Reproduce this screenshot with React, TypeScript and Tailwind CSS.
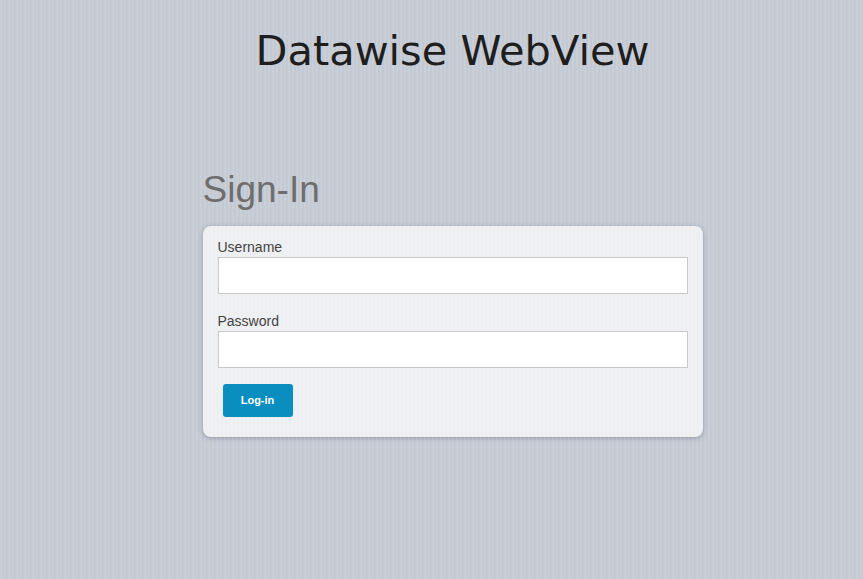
import React from 'react';

const Field = ({label, type}: {label: string; type: string}) => (
    <div className="flex flex-col">
        <label className="text-[14px] leading-[14px] text-[#444]">{label}</label>
        <input type={type} className="mt-[3px] h-[37px] w-[470px] border border-[#c9c9c9] bg-white px-2 text-[14px] outline-none" />
    </div>
);

const App = () => {
    return (
        <div className="min-h-[579px] w-full bg-[#c8ced6] bg-[repeating-linear-gradient(90deg,#cacfd7_0px,#cacfd7_2px,#c4cad3_2px,#c4cad3_4px)] pl-[42px] font-['Liberation_Sans',Arial,sans-serif]">
            <div className="flex flex-col items-center">
                <h1 className="mt-[31px] font-['DejaVu_Sans',Verdana,sans-serif] text-[41.5px] leading-[40px] text-[#1e1e1e]">
                    Datawise WebView
                </h1>
                <div className="mt-[101px] w-[500px]">
                    <h2 className="text-[37px] leading-[36px] text-[#6e6e6e]">Sign-In</h2>
                    <div className="mt-[18px] flex flex-col rounded-[8px] bg-[#eef0f2] bg-[repeating-linear-gradient(90deg,#eff1f3_0px,#eff1f3_2px,#eceef1_2px,#eceef1_4px)] px-[15px] pt-[14px] pb-[20px] shadow-[0_1px_5px_rgba(80,90,110,0.45)]">
                        <Field label="Username" type="text" />
                        <div className="mt-[20px]">
                            <Field label="Password" type="password" />
                        </div>
                        <div className="mt-[16px] pl-[5px]">
                            <button type="submit" className="h-[33px] w-[70px] rounded-[3px] bg-[#0a8ec0] text-[11px] font-bold text-white">
                                Log-in
                            </button>
                        </div>
                    </div>
                </div>
            </div>
        </div>
    );
};

export default App;
